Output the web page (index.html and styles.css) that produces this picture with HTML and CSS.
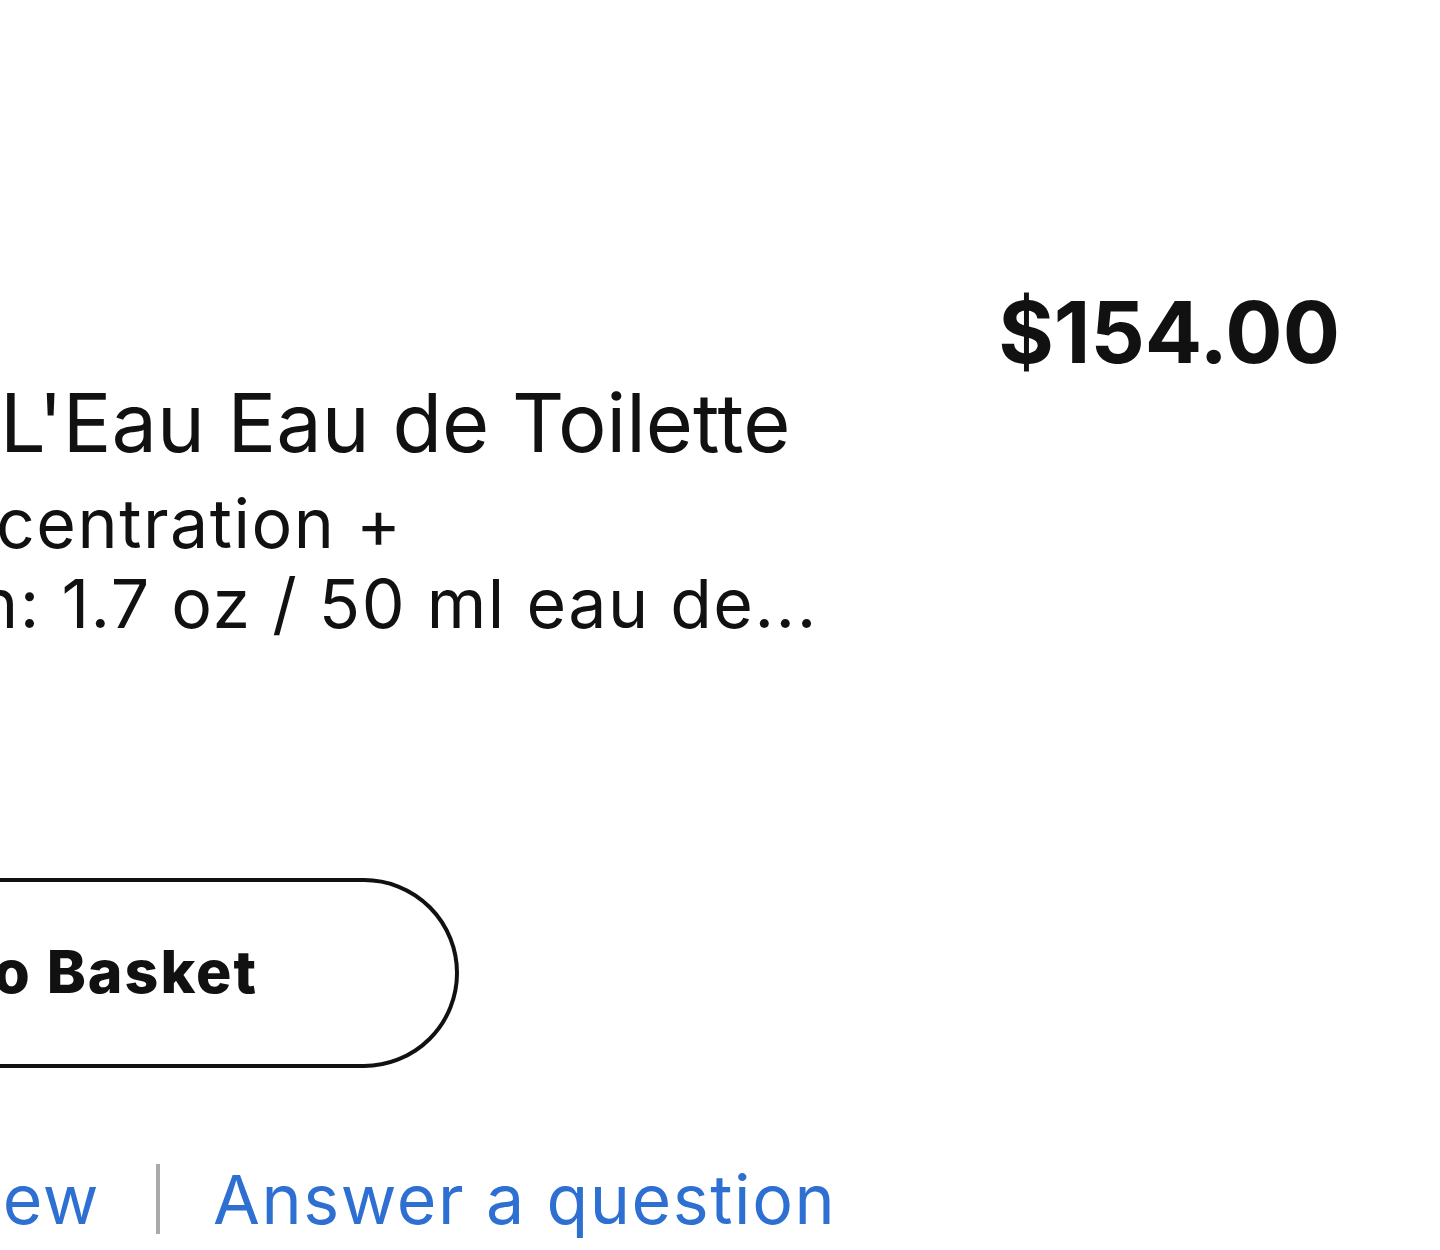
FILE: index.html
```html
<!DOCTYPE html>
<html lang="en">
<head>
<meta charset="utf-8">
<title>Product</title>
<link rel="stylesheet" href="styles.css">
</head>
<body>
<main class="page">
  <section class="product">
    <div class="info">
      <h1 class="title">L'Eau Eau de Toilette</h1>
      <p class="desc line-a">centration +</p>
      <p class="desc line-b">n: 1.7 oz / 50 ml eau de...</p>
      <button class="basket"><span>Add to Basket</span></button>
      <nav class="links">
        <div class="link-first"><a href="#">Write a review</a></div>
        <span class="sep"></span>
        <a href="#" class="link">Answer a question</a>
      </nav>
    </div>
    <div class="price">$154.00</div>
  </section>
</main>
</body>
</html>
```
FILE: styles.css
```css
html, body {
  margin: 0;
  padding: 0;
  background: #fff;
}
body {
  font-family: Inter, "Liberation Sans", sans-serif;
  color: #111;
}
.page {
  width: 1440px;
  height: 1250px;
  overflow: hidden;
}
.product {
  display: flex;
  justify-content: space-between;
  align-items: flex-start;
  padding-top: 290px;
  padding-right: 100px;
}
.info {
  display: flex;
  flex-direction: column;
  align-items: flex-start;
  padding-top: 92px;
}
.title {
  margin: 0;
  font-size: 81px;
  font-weight: 400;
  line-height: 82px;
  white-space: nowrap;
}
.desc {
  margin: 0;
  font-size: 68px;
  line-height: 80px;
  letter-spacing: 1.5px;
  white-space: nowrap;
}
.line-a {
  margin-top: 19px;
  text-indent: -4px;
}
.line-b {
  text-indent: -22px;
}
.basket {
  margin-top: 235px;
  width: 800px;
  margin-left: -341px;
  height: 190px;
  border: 4px solid #111;
  border-radius: 95px;
  background: #fff;
  display: flex;
  justify-content: flex-end;
  align-items: center;
  padding: 0 197px 4px 0;
  font-family: Inter, "Liberation Sans", sans-serif;
  font-size: 59px;
  font-weight: 800;
  letter-spacing: 2px;
  color: #111;
  white-space: nowrap;
  box-sizing: border-box;
}
.links {
  margin-top: 96px;
  display: flex;
  align-items: center;
  font-size: 68px;
  line-height: 70px;
  letter-spacing: 1.6px;
}
.links a {
  color: #2e6fd2;
  text-decoration: none;
  white-space: nowrap;
}
.link-first {
  width: 100px;
  display: flex;
  justify-content: flex-end;
}
.sep {
  width: 4px;
  height: 70px;
  background: #aaa;
  margin: 0 53px 0 56px;
}
.price {
  font-size: 85px;
  font-weight: 700;
  line-height: 85px;
  white-space: nowrap;
}
```
